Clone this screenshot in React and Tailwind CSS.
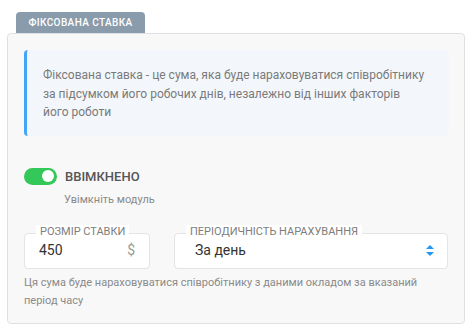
function Field({ label, className, children }) {
  return (
    <div className={"relative h-[36px] rounded-[4px] border border-[#e3e4e6] bg-white " + className}>
      <span className="absolute -top-[9px] left-[11px] bg-white px-[4px] text-[11px] leading-[14px] uppercase text-[#7d7d7d]">
        {label}
      </span>
      {children}
    </div>
  )
}

function App() {
  return (
    <div className="h-[335px] w-[476px] bg-white pt-[12px] pl-[7px] font-['Roboto',sans-serif]">
      <div className="ml-[9px] flex h-[21px] w-[129px] items-center justify-center rounded-t-[4px] bg-[#8a9bac] text-[10px] font-medium tracking-[0.4px] text-white">
        ФІКСОВАНА СТАВКА
      </div>
      <div className="w-[458px] rounded-[4px] border border-[#dfe0e3] bg-[#f8f8f9] px-[16px] pt-[16px] pb-[13px]">
        <div className="w-[425px] rounded-[4px] border-l-[3px] border-[#42a5f5] bg-[#f3f7fb] pt-[16px] pb-[14px] pl-[16px] pr-[8px] text-[12px] leading-[18.5px] text-[#7a7a7a]">
          Фіксована ставка - це сума, яка буде нараховуватися співробітнику
          <br />
          за підсумком його робочих днів, незалежно від інших факторів
          <br />
          його роботи
        </div>

        <div className="mt-[31px] flex items-center gap-[8px]">
          <div className="flex h-[17px] w-[33px] items-center justify-end rounded-full bg-[#34c759] pr-[3px]">
            <div className="h-[12px] w-[12px] rounded-full bg-white"></div>
          </div>
          <span className="text-[13px] font-medium text-[#555]">ВВІМКНЕНО</span>
        </div>
        <div className="mt-[6px] pl-[40px] text-[11px] text-[#8a8a8a]">Увімкніть модуль</div>

        <div className="mt-[24px] flex gap-[24px]">
          <Field label="Розмір ставки" className="w-[126px]">
            <div className="flex h-full items-center justify-between pl-[14px] pr-[14px] text-[14px]">
              <span className="text-[#333]">450</span>
              <span className="text-[#9a9a9a]">$</span>
            </div>
          </Field>
          <Field label="Періодичність нарахування" className="w-[274px]">
            <div className="flex h-full items-center justify-between pl-[20px] pr-[13px] text-[14px]">
              <span className="text-[#333]">За день</span>
              <svg width="8" height="11" viewBox="0 0 8 11">
                <path d="M4 0 L8 4 L0 4 Z" fill="#2196f3" />
                <path d="M0 7 L8 7 L4 11 Z" fill="#2196f3" />
              </svg>
            </div>
          </Field>
        </div>

        <div className="mt-[5px] text-[11px] leading-[18px] text-[#8a8a8a]">
          Ця сума буде нараховуватися співробітнику з даними окладом за вказаний період часу
        </div>
      </div>
    </div>
  )
}

export default App
